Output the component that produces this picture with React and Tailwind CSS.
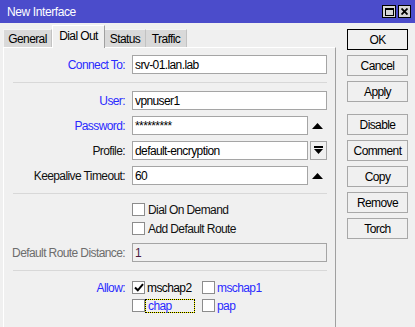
import React from 'react';

const blue = 'text-[#2a2aff]';

function Arrow() {
  return (
    <svg width="11" height="6" viewBox="0 0 11 6" className="block">
      <polygon points="0,6 5.5,0 11,6" fill="#000" />
    </svg>
  );
}

function Field({ label, labelClass = 'text-[#111]', children }) {
  return (
    <div className="flex items-center h-[19px]">
      <div className={`w-[128px] pr-[7px] text-right whitespace-nowrap ${labelClass}`}>{label}</div>
      {children}
    </div>
  );
}

function Input({ value, width = 'w-[195px]', disabled }) {
  return (
    <div
      className={`${width} h-[19px] border flex items-center px-[2px] whitespace-nowrap ${
        disabled ? 'bg-[#f0f0f0] border-[#a5a5a5] text-[#4a1a40]' : 'bg-white border-[#a5a5a5] text-black'
      }`}
    >
      {value}
    </div>
  );
}

function Check({ checked }) {
  return (
    <div className="w-[13px] h-[13px] border border-[#8c8c8c] bg-white flex items-center justify-center shrink-0">
      {checked && (
        <svg width="10" height="9" viewBox="0 0 10 9">
          <path d="M1 4.5 L3.8 7.3 L9 1.2" stroke="#000" strokeWidth="2" fill="none" />
        </svg>
      )}
    </div>
  );
}

function Sep() {
  return <div className="h-px bg-[#d8d8d8] ml-[9px] mr-[8px]" />;
}

function Btn({ children, primary }) {
  return (
    <div
      className={`h-[21px] flex items-center justify-center bg-[#f0f0f0] border ${
        primary ? 'border-black' : 'border-[#a8a8a8]'
      }`}
    >
      {children}
    </div>
  );
}

export default function App() {
  return (
    <div
      className="w-[415px] h-[327px] bg-[#f0f0f0] overflow-hidden text-[12px] tracking-[-0.6px] leading-none"
      style={{ fontFamily: '"Liberation Sans", Arial, sans-serif' }}
    >
      {/* title bar */}
      <div className="h-[23px] bg-[#4b4ccb] flex items-center pl-[7px] pr-[4px]">
        <span className="text-white tracking-[-0.4px]">New Interface</span>
        <div className="ml-auto flex gap-[2px]">
          <div className="w-[14px] h-[13px] bg-[#d6d6d6] border border-black flex items-center justify-center">
            <div className="w-[9px] h-[8px] border border-black border-t-2" />
          </div>
          <div className="w-[13px] h-[13px] bg-[#d6d6d6] border border-black flex items-center justify-center">
            <svg width="7" height="7" viewBox="0 0 7 7">
              <path d="M0.5 0.5 L6.5 6.5 M6.5 0.5 L0.5 6.5" stroke="#000" strokeWidth="1.8" />
            </svg>
          </div>
        </div>
      </div>

      <div className="flex h-[304px]">
        {/* left part: tabs + panel */}
        <div className="ml-[3px] w-[333px] flex flex-col pt-[2px]">
          <div className="flex items-end h-[22px]">
            <div className="w-[49px] h-[18px] bg-[#d9d9d9] border-t border-l border-[#f4f4f4] border-r border-r-[#c2c2c2] flex items-center justify-center">General</div>
            <div className="w-[53px] h-[23px] -mb-px relative z-10 bg-[#f0f0f0] border-t border-l border-white border-r border-r-[#a0a0a0] flex items-center justify-center pb-[2px]">Dial Out</div>
            <div className="w-[41px] h-[18px] bg-[#d9d9d9] border-t border-[#f4f4f4] border-r border-r-[#c2c2c2] flex items-center justify-center">Status</div>
            <div className="w-[41px] h-[18px] bg-[#d9d9d9] border-t border-[#f4f4f4] border-r border-r-[#c2c2c2] flex items-center justify-center">Traffic</div>
          </div>

          <div className="flex-1 border-t border-l border-white border-r border-r-[#a0a0a0] pt-[7px] flex flex-col">
            <Field label="Connect To:" labelClass={blue}>
              <Input value="srv-01.lan.lab" />
            </Field>
            <div className="mt-[8px]"><Sep /></div>
            <div className="mt-[8px]">
              <Field label="User:" labelClass={blue}>
                <Input value="vpnuser1" />
              </Field>
            </div>
            <div className="mt-[6px]">
              <Field label="Password:" labelClass={blue}>
                <Input value="*********" width="w-[176px]" />
                <div className="w-[19px] flex justify-center"><Arrow /></div>
              </Field>
            </div>
            <div className="mt-[6px]">
              <Field label="Profile:">
                <Input value="default-encryption" width="w-[176px]" />
                <div className="ml-[2px] w-[17px] h-[19px] border border-[#a5a5a5] flex items-center justify-center">
                  <svg width="9" height="9" viewBox="0 0 9 9">
                    <rect x="0" y="0" width="9" height="2" fill="#000" />
                    <polygon points="0,3 9,3 4.5,8" fill="#000" />
                  </svg>
                </div>
              </Field>
            </div>
            <div className="mt-[6px]">
              <Field label="Keepalive Timeout:">
                <Input value="60" width="w-[176px]" />
                <div className="w-[19px] flex justify-center"><Arrow /></div>
              </Field>
            </div>
            <div className="mt-[8px]"><Sep /></div>

            <div className="mt-[9px] pl-[128px] flex items-center gap-[3px] h-[13px]">
              <Check /> <span className="text-[#111]">Dial On Demand</span>
            </div>
            <div className="mt-[6px] pl-[128px] flex items-center gap-[3px] h-[13px]">
              <Check /> <span className="text-[#111]">Add Default Route</span>
            </div>
            <div className="mt-[8px]">
              <Field label="Default Route Distance:" labelClass="text-[#6d6d6d]">
                <Input value="1" disabled />
              </Field>
            </div>
            <div className="mt-[8px]"><Sep /></div>

            <div className="mt-[10px] flex">
              <div className={`w-[128px] pr-[7px] text-right h-[13px] flex items-center justify-end ${blue}`}>Allow:</div>
              <div className="flex flex-col gap-[5px]">
                <div className="flex h-[13px]">
                  <div className="w-[70px] flex items-center gap-[2px]">
                    <Check checked /> <span className="text-black">mschap2</span>
                  </div>
                  <div className="flex items-center gap-[2px]">
                    <Check /> <span className={blue}>mschap1</span>
                  </div>
                </div>
                <div className="flex h-[13px]">
                  <div className="w-[70px] flex items-center">
                    <Check />
                    <span className="bg-[#ffff00] block">
                      <span className={`block border border-dotted border-black bg-[#f0f0f0] bg-clip-padding w-[50px] h-[14px] pl-[2px] flex items-center ${blue}`}>chap</span>
                    </span>
                  </div>
                  <div className="flex items-center gap-[2px]">
                    <Check /> <span className={blue}>pap</span>
                  </div>
                </div>
              </div>
            </div>
          </div>
        </div>

        {/* buttons */}
        <div className="ml-[11px] w-[61px] pt-[6px] flex flex-col gap-[5px] text-black">
          <Btn primary>OK</Btn>
          <Btn>Cancel</Btn>
          <Btn>Apply</Btn>
          <div className="mt-[7px]"><Btn>Disable</Btn></div>
          <Btn>Comment</Btn>
          <Btn>Copy</Btn>
          <Btn>Remove</Btn>
          <Btn>Torch</Btn>
        </div>
      </div>
    </div>
  );
}
